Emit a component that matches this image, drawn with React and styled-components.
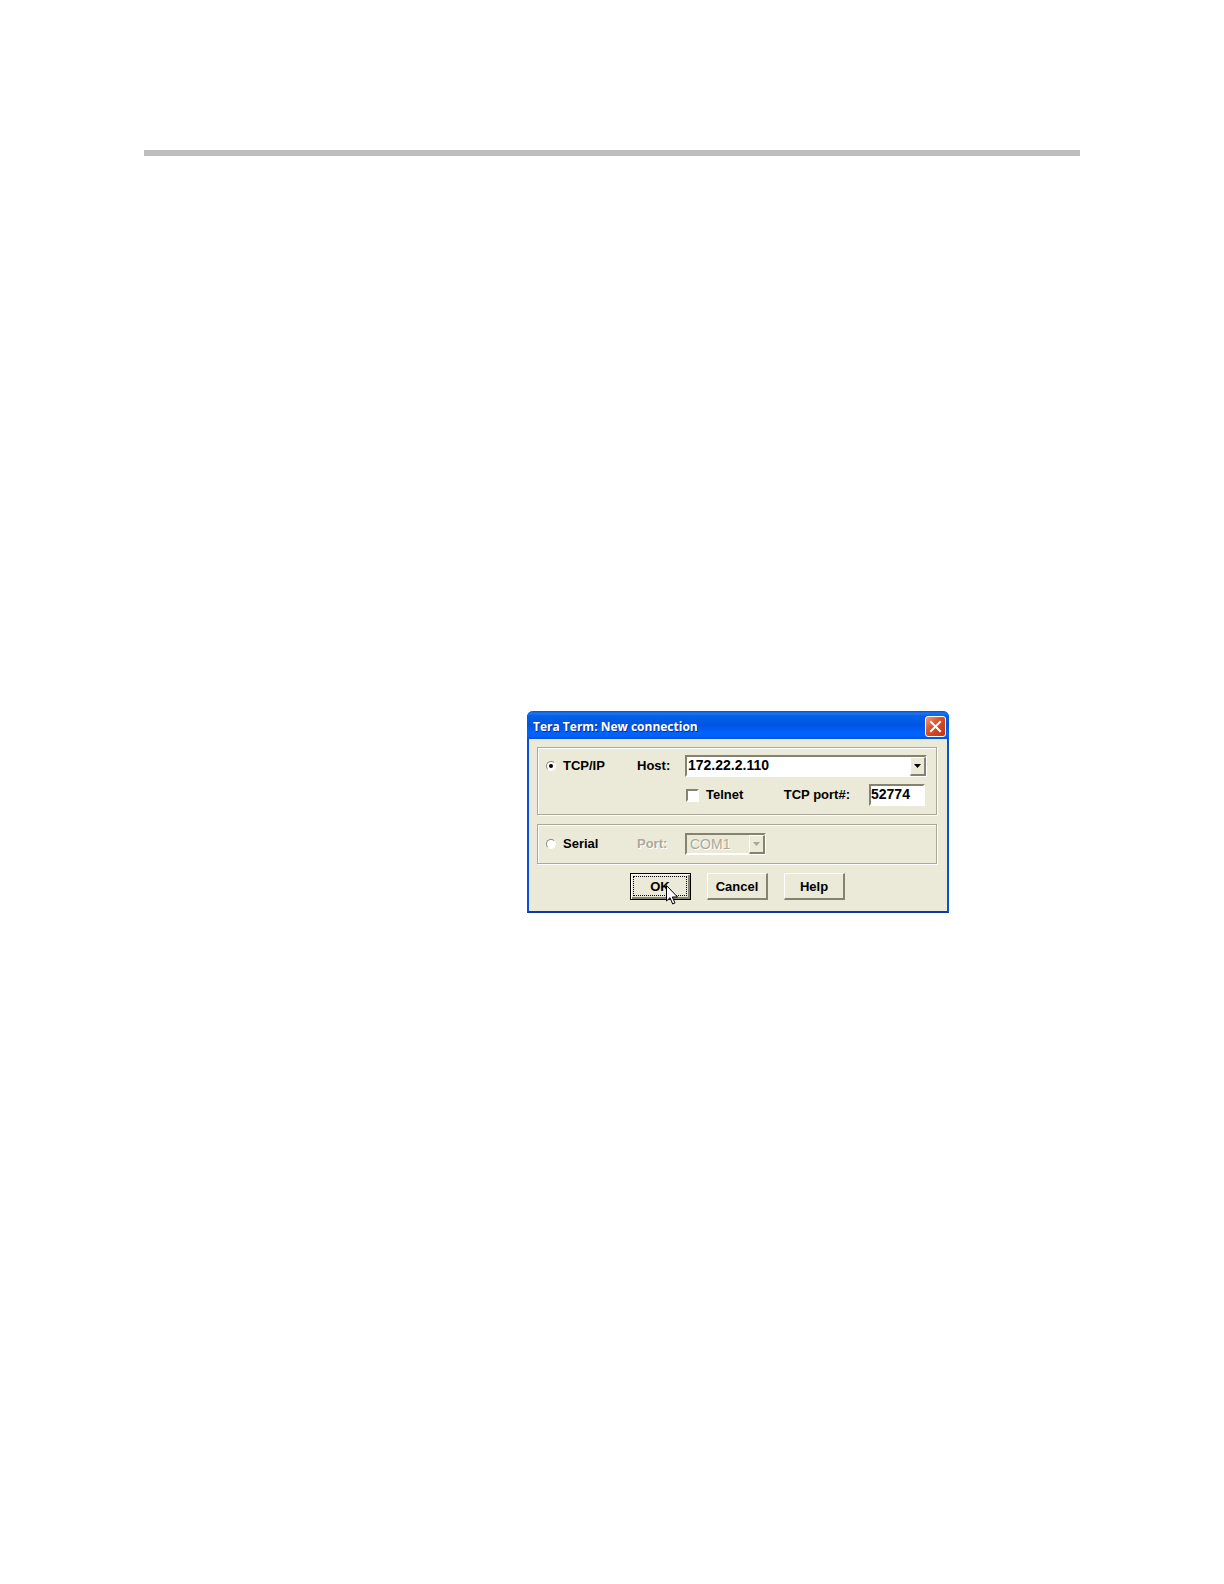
import React, { useState } from "react"
import styled, { createGlobalStyle, css } from "styled-components"

const GlobalStyle = createGlobalStyle`
  * {
    box-sizing: border-box;
  }
  body {
    margin: 0;
    background-color: #fff;
    font-family: "Liberation Sans", Arial, sans-serif;
  }
`
const Page = styled.main`
  min-height: 100vh;
  padding: 150px 144px;
`
const Rule = styled.hr`
  height: 6px;
  margin: 0;
  border: none;
  background-color: #bebebe;
`
const Dialog = styled.section`
  max-width: 422px;
  margin: 555px 0 0 383px;
  border: solid #0a50d0;
  border-width: 0 2px 2px;
  border-bottom-color: #0a3ba6;
  border-radius: 6px 6px 0 0;
  background-color: #ebe9d8;
  color: #000;
  font-size: 13px;
  font-weight: 700;
  line-height: 16px;
`
const TitleBar = styled.header`
  display: flex;
  align-items: center;
  justify-content: space-between;
  height: 28px;
  margin: 0 -2px;
  padding: 3px 3px 0 6px;
  border-radius: 6px 6px 0 0;
  background: linear-gradient(
    #0a4fd0 0%,
    #1c74f4 8%,
    #0560e8 18%,
    #0055e2 50%,
    #0062fa 75%,
    #0062fa 90%,
    #0050d8 100%
  );
`
const Title = styled.h1`
  margin: 0;
  color: #fff;
  font-family: "Open Sans", "Noto Sans", sans-serif;
  font-size: 12px;
  font-weight: 700;
  line-height: 14px;
  text-shadow: 1px 1px #0a2f8c;
`
const CloseButton = styled.button`
  display: flex;
  align-items: center;
  justify-content: center;
  width: 21px;
  height: 21px;
  padding: 0;
  border: 1px solid #fff;
  border-radius: 3px;
  background: linear-gradient(135deg, #ee9a7c, #dc4c28 45%, #c0340e);
`
const Body = styled.form`
  display: flex;
  flex-direction: column;
  gap: 9px;
  padding: 8px 10px 11px 8px;
`
const Group = styled.div`
  display: grid;
  grid-template-columns: 91px 48px 1fr;
  align-items: center;
  row-gap: 7px;
  padding: ${(props) => (props.$roomy ? 8 : 7)}px 9px 8px 8px;
  border: 1px solid #aca899;
  box-shadow: 1px 1px #fff, inset 1px 1px #fff;
`
const Option = styled.label`
  display: flex;
  align-items: center;
  gap: 7px;
`
const sunken = css`
  border: 2px solid;
  border-color: #85826f #fff #fff #85826f;
`
const Radio = styled.input`
  appearance: none;
  display: grid;
  place-items: center;
  width: 10px;
  height: 10px;
  margin: 0;
  border: 1px solid;
  border-color: #8d8a7a #fff #fff #8d8a7a;
  border-radius: 50%;
  background-color: #fff;

  &:checked::before {
    content: "";
    width: 4px;
    height: 4px;
    border-radius: 50%;
    background-color: #000;
  }
`
const Checkbox = styled.input`
  appearance: none;
  width: 13px;
  height: 13px;
  margin: 0;
  ${sunken}
  background-color: #fff;

  &:checked {
    background-color: #000;
  }
`
const Label = styled.label`
  color: ${(props) => (props.$disabled ? "#aca899" : "#000")};
  text-shadow: ${(props) => (props.$disabled ? "1px 1px #fff" : "none")};
`
const Combo = styled.div`
  position: relative;
  width: ${(props) => props.$width || "100%"};
`
const Select = styled.select`
  appearance: none;
  display: block;
  width: 100%;
  height: 22px;
  padding: 0 18px 2px 1px;
  ${sunken}
  border-radius: 0;
  background-color: #fff;
  color: #000;
  font-family: inherit;
  font-size: 14px;
  font-weight: 700;

  &:disabled {
    padding: 0 18px 0 3px;
    background-color: #ebe9d8;
    color: #aca899;
    font-weight: 400;
    text-shadow: 1px 1px #fff;
    opacity: 1;
  }
`
const Arrow = styled.span`
  position: absolute;
  top: 2px;
  right: 1px;
  display: flex;
  align-items: center;
  justify-content: center;
  width: 16px;
  height: 19px;
  border: solid;
  border-width: 1px 2px 2px 1px;
  border-color: #fff #85826f #85826f #fff;
  background-color: #ebe9d8;
  color: ${(props) => (props.$disabled ? "#aca899" : "#000")};
  pointer-events: none;
`
const SubRow = styled.div`
  display: flex;
  align-items: center;
  justify-content: space-between;
  grid-column: 3;
  padding: 0 2px 0 1px;
`
const PortField = styled.div`
  display: flex;
  align-items: center;
  gap: 19px;
`
const Input = styled.input`
  width: 56px;
  height: 22px;
  padding: 0 0 2px;
  ${sunken}
  background-color: #fff;
  color: #000;
  font-family: inherit;
  font-size: 14px;
  font-weight: 700;
`
const Actions = styled.div`
  display: flex;
  justify-content: center;
  gap: 16px;
`
const Button = styled.button`
  position: relative;
  width: 61px;
  height: 27px;
  padding: 1px 0 0 1px;
  border: solid;
  border-width: 1px 2px 2px 1px;
  border-color: #fff #85826f #85826f #fff;
  background-color: #ebe9d8;
  color: #000;
  font-family: inherit;
  font-size: 13px;
  font-weight: 700;
  line-height: 16px;

  ${(props) =>
    props.$default &&
    css`
      padding: 0;
      border: 1px solid #000;
      box-shadow: inset 1px 1px #fff, inset -2px -2px #85826f;

      &::after {
        content: "";
        position: absolute;
        inset: 2px 3px 3px 2px;
        border: 1px dotted #000;
      }
    `}
`
const Pointer = styled.svg`
  position: absolute;
  top: 11px;
  left: 35px;
  z-index: 1;
`

const DropArrow = ({ disabled }) => (
  <Arrow $disabled={disabled}>
    <svg width="7" height="4" viewBox="0 0 7 4" aria-hidden="true">
      <path d="M0 0h7L3.5 4z" fill="currentColor" />
    </svg>
  </Arrow>
)

const App = () => {
  const [mode, setMode] = useState("tcp")
  const [telnet, setTelnet] = useState(false)
  const serial = mode === "serial"

  return (
    <>
      <GlobalStyle />
      <Page>
        <Rule />
        <Dialog role="dialog" aria-labelledby="title">
          <TitleBar>
            <Title id="title">Tera Term: New connection</Title>
            <CloseButton type="button" aria-label="Close">
              <svg width="13" height="13" viewBox="0 0 13 13">
                <path
                  d="M2 2l9 9M11 2l-9 9"
                  stroke="#fff"
                  strokeWidth="2"
                  strokeLinecap="square"
                />
              </svg>
            </CloseButton>
          </TitleBar>
          <Body onSubmit={(e) => e.preventDefault()}>
            <Group>
              <Option>
                <Radio
                  type="radio"
                  name="mode"
                  checked={!serial}
                  onChange={() => setMode("tcp")}
                />
                TCP/IP
              </Option>
              <Label htmlFor="host">Host:</Label>
              <Combo>
                <Select id="host">
                  <option>172.22.2.110</option>
                </Select>
                <DropArrow />
              </Combo>
              <SubRow>
                <Option>
                  <Checkbox
                    type="checkbox"
                    checked={telnet}
                    onChange={() => setTelnet(!telnet)}
                  />
                  Telnet
                </Option>
                <PortField>
                  <Label htmlFor="port">TCP port#:</Label>
                  <Input id="port" defaultValue="52774" />
                </PortField>
              </SubRow>
            </Group>
            <Group $roomy>
              <Option>
                <Radio
                  type="radio"
                  name="mode"
                  checked={serial}
                  onChange={() => setMode("serial")}
                />
                Serial
              </Option>
              <Label htmlFor="com" $disabled={!serial}>
                Port:
              </Label>
              <Combo $width="81px">
                <Select id="com" disabled={!serial}>
                  <option>COM1</option>
                </Select>
                <DropArrow disabled={!serial} />
              </Combo>
            </Group>
            <Actions>
              <Button $default>
                OK
                <Pointer width="13" height="20" viewBox="0 0 13 20">
                  <path
                    d="M.5 .5v15.5l3.5-3.300 2.700 6.300 2.300-1-2.700-6h5.200z"
                    fill="#fff"
                    stroke="#000"
                  />
                </Pointer>
              </Button>
              <Button type="button">Cancel</Button>
              <Button type="button">Help</Button>
            </Actions>
          </Body>
        </Dialog>
      </Page>
    </>
  )
}

export default App
